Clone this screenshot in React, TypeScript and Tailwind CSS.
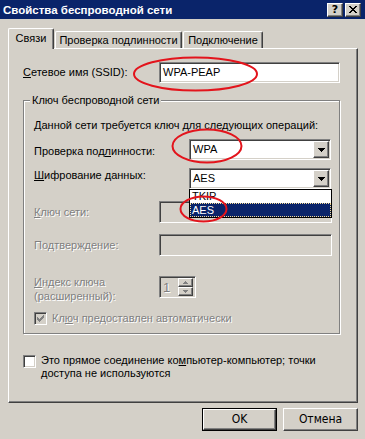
import React from "react";

const raised =
  "border border-t-white border-l-white border-b-[#404040] border-r-[#404040] shadow-[inset_-1px_-1px_0_#808080]";
const sunken =
  "border border-t-[#808080] border-l-[#808080] border-b-white border-r-white shadow-[inset_1px_1px_0_#404040,inset_-1px_-1px_0_#d4d0c8]";
const dis = "text-[#808080] [text-shadow:1px_1px_0_#ffffff]";

function DownArrow({ color = "#000" }: { color?: string }) {
  return (
    <svg width="7" height="4" viewBox="0 0 7 4" shapeRendering="crispEdges">
      <path d="M0 0h7v1h-1v1h-1v1h-1v1h-1v-1h-1v-1h-1v-1h-1z" fill={color} />
    </svg>
  );
}

function Combo({ value }: { value: string }) {
  return (
    <div className={`w-[142px] h-[21px] bg-white flex items-center p-[1px] ${sunken}`}>
      <span className="flex-1 pl-[2px]">{value}</span>
      <div className={`w-[16px] h-[17px] bg-[#d4d0c8] flex items-center justify-center ${raised}`}>
        <DownArrow />
      </div>
    </div>
  );
}

function CheckMark({ color }: { color: string }) {
  return (
    <svg width="7" height="7" viewBox="0 0 7 7" shapeRendering="crispEdges">
      <path
        d="M6 0h1v1h-1z M5 1h2v1h-2z M0 2h1v1h-1z M4 2h3v1h-3z M0 3h2v1h-2z M3 3h3v1h-3z M0 4h5v1h-5z M1 5h3v1h-3z M2 6h1v1h-1z"
        fill={color}
      />
    </svg>
  );
}

function Check({ checked, disabled }: { checked?: boolean; disabled?: boolean }) {
  return (
    <div
      className={`w-[13px] h-[13px] shrink-0 flex items-center justify-center ${sunken} ${
        disabled ? "bg-[#d4d0c8]" : "bg-white"
      }`}
    >
      {checked && <CheckMark color={disabled ? "#808080" : "#000"} />}
    </div>
  );
}

function TitleBtn({ children }: { children: React.ReactNode }) {
  return (
    <div className={`w-[16px] h-[14px] bg-[#d4d0c8] flex items-center justify-center ${raised}`}>
      {children}
    </div>
  );
}

function Button({ label, isDefault }: { label: string; isDefault?: boolean }) {
  return (
    <div className={`w-[75px] h-[23px] ${isDefault ? "border border-black" : ""}`}>
      <div
        className={`w-full h-full flex items-center justify-center bg-[#d4d0c8] ${raised}`}
      >
        <span className="font-['DejaVu_Sans_Condensed','Liberation_Sans',sans-serif] text-[12px]">{label}</span>
      </div>
    </div>
  );
}

export default function App() {
  return (
    <div className="w-[365px] h-[439px] bg-[#d4d0c8] relative overflow-hidden font-['Liberation_Sans',Arial,sans-serif] text-[11px] leading-[13px] text-black">
      {/* Title bar */}
      <div className="h-[19px] bg-[#0a246a] flex items-center pl-[3px] pr-[4px]">
        <span className="flex-1 text-white font-bold text-[11.5px] leading-[14px]">
          Свойства беспроводной сети
        </span>
        <div className="flex gap-[2px]">
          <TitleBtn>
            <span className="font-bold text-[11px] leading-[11px] font-['DejaVu_Sans',sans-serif]">?</span>
          </TitleBtn>
          <TitleBtn>
            <svg width="8" height="7" viewBox="0 0 8 7" shapeRendering="crispEdges">
              <path
                d="M0 0h2v1h-2z M6 0h2v1h-2z M1 1h2v1h-2z M5 1h2v1h-2z M2 2h4v1h-4z M3 3h2v1h-2z M2 4h4v1h-4z M1 5h2v1h-2z M5 5h2v1h-2z M0 6h2v1h-2z M6 6h2v1h-2z"
                fill="#000"
              />
            </svg>
          </TitleBtn>
        </div>
      </div>

      {/* Tabs */}
      <div className="pl-[8px] pt-[9px] flex items-end">
        <div className="relative z-10 -mb-[1px] w-[46px] h-[21px] bg-[#d4d0c8] border-l border-t border-l-white border-t-white border-r border-r-[#404040] rounded-tl-[2px] rounded-tr-[2px] shadow-[inset_-1px_0_0_#808080] flex items-center justify-center pb-[1px]">
          Связи
        </div>
        <div className="ml-[1px] w-[127px] h-[17px] border-l border-t border-l-white border-t-white border-r border-r-[#404040] rounded-tl-[2px] rounded-tr-[2px] shadow-[inset_-1px_0_0_#808080] flex items-center justify-center">
          Проверка подлинности
        </div>
        <div className="ml-[1px] w-[80px] h-[17px] border-l border-t border-l-white border-t-white border-r border-r-[#404040] rounded-tl-[2px] rounded-tr-[2px] shadow-[inset_-1px_0_0_#808080] flex items-center justify-center">
          Подключение
        </div>
      </div>

      {/* Panel */}
      <div className="ml-[8px] w-[350px] h-[355px] border border-t-white border-l-white border-b-[#404040] border-r-[#404040] shadow-[inset_-1px_-1px_0_#808080] pl-[14px] pt-[13px]">
        {/* SSID */}
        <div className="flex items-center h-[21px]">
          <span className="w-[136px]">
            <span className="underline">С</span>етевое имя (SSID):
          </span>
          <div className={`w-[181px] h-[21px] bg-white flex items-center pl-[3px] ${sunken}`}>
            WPA-PEAP
          </div>
        </div>

        {/* Group box */}
        <div className="mt-[17px] w-[317px] h-[234px] border border-[#808080] shadow-[inset_1px_1px_0_#ffffff,1px_1px_0_#ffffff] pl-[10px] flex flex-col">
          <span className="-mt-[7px] -ml-[4px] px-[2px] self-start bg-[#d4d0c8]">
            Ключ беспроводной сети
          </span>
          <div className="mt-[12px]">Данной сети требуется ключ для следующих операций:</div>

          <div className="mt-[7px] flex items-start h-[21px]">
            <span className="w-[155px] pt-[6px]">
              Проверка под<span className="underline">л</span>инности:
            </span>
            <Combo value="WPA" />
          </div>

          <div className="mt-[8px] flex items-start h-[21px] relative">
            <span className="w-[155px] pt-[1px]">
              <span className="underline">Ш</span>ифрование данных:
            </span>
            <Combo value="AES" />
            <div className="absolute left-[155px] top-[21px] z-20 w-[143px] h-[29px] border border-black bg-white flex flex-col">
              <div className="h-[13px] pl-[2px] leading-[13px]">TKIP</div>
              <div className="h-[14px] pl-[1px] leading-[12px] bg-[#0a246a] text-white border border-dotted border-[#f5db95]">
                AES
              </div>
            </div>
          </div>

          <div className="mt-[12px] flex items-center h-[22px]">
            <span className={`w-[125px] ${dis}`}>
              <span className="underline">К</span>люч сети:
            </span>
            <div className={`w-[173px] h-[22px] bg-[#d4d0c8] ${sunken}`} />
          </div>

          <div className="mt-[11px] flex items-center h-[22px]">
            <span className={`w-[125px] ${dis}`}>
              По<span className="underline">д</span>тверждение:
            </span>
            <div className={`w-[173px] h-[22px] bg-[#d4d0c8] ${sunken}`} />
          </div>

          <div className="mt-[20px] flex items-start h-[22px]">
            <span className={`w-[125px] leading-[14px] -mt-[1px] ${dis}`}>
              <span className="underline">И</span>ндекс ключа
              <br />
              (расширенный):
            </span>
            <div className={`w-[37px] h-[22px] bg-[#d4d0c8] flex items-center p-[2px] ${sunken}`}>
              <span className={`flex-1 pl-[1px] text-[13px] ${dis}`}>1</span>
              <div className="flex flex-col w-[15px] h-[18px]">
                <div className={`h-[9px] flex items-center justify-center bg-[#d4d0c8] ${raised}`}>
                  <svg width="5" height="3" viewBox="0 0 5 3" shapeRendering="crispEdges">
                    <path d="M2 0h1v1h1v1h1v1h-5v-1h1v-1h1z" fill="#808080" />
                  </svg>
                </div>
                <div className={`h-[9px] flex items-center justify-center bg-[#d4d0c8] ${raised}`}>
                  <svg width="5" height="3" viewBox="0 0 5 3" shapeRendering="crispEdges">
                    <path d="M0 0h5v1h-1v1h-1v1h-1v-1h-1v-1h-1z" fill="#808080" />
                  </svg>
                </div>
              </div>
            </div>
          </div>

          <div className="mt-[14px] flex items-center gap-[5px]">
            <Check checked disabled />
            <span className={dis}>
              Кл<span className="underline">ю</span>ч предоставлен автоматически
            </span>
          </div>
        </div>

        {/* Ad-hoc checkbox */}
        <div className="mt-[20px] flex items-start gap-[5px]">
          <div className="pt-[1px]">
            <Check />
          </div>
          <span className="leading-[13px]">
            Это прямое соединение ко<span className="underline">м</span>пьютер-компьютер; точки
            <br />
            доступа не используются
          </span>
        </div>
      </div>

      {/* Buttons */}
      <div className="mt-[5px] pr-[7px] flex justify-end gap-[6px]">
        <Button label="OK" isDefault />
        <Button label="Отмена" />
      </div>

      {/* Red annotation ellipses */}
      <svg
        className="absolute left-0 top-0 pointer-events-none z-30"
        width="365"
        height="439"
        viewBox="0 0 365 439"
      >
        <ellipse cx="195.5" cy="74" rx="61.5" ry="16.5" fill="none" stroke="#e3141c" strokeWidth="2" />
        <ellipse cx="207" cy="146" rx="34.5" ry="16.5" fill="none" stroke="#e3141c" strokeWidth="2" />
        <ellipse cx="203.5" cy="209" rx="23" ry="12.5" fill="none" stroke="#e3141c" strokeWidth="2" />
      </svg>
    </div>
  );
}
